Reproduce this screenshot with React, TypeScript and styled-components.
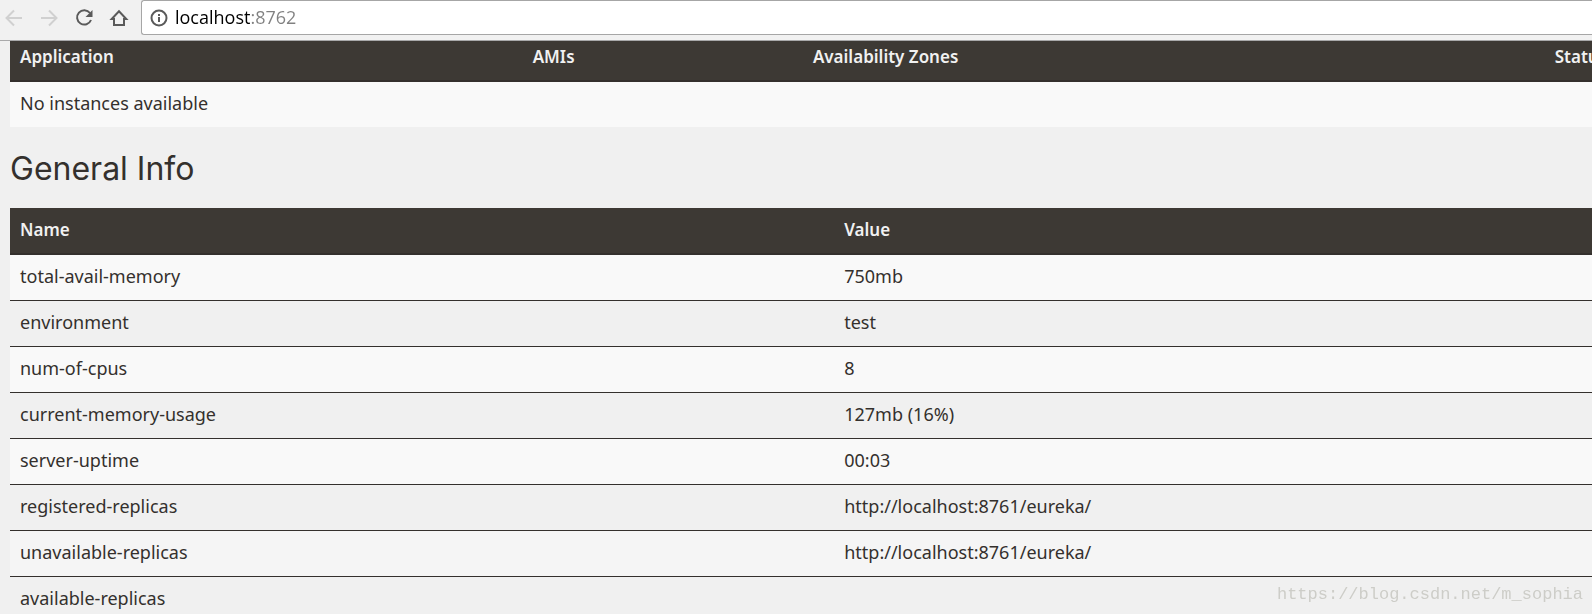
import React from "react";
import styled, { createGlobalStyle } from "styled-components";

const GlobalStyle = createGlobalStyle`
  * { box-sizing: border-box; }
  html, body, #root { height: 100%; }
  body {
    margin: 0;
    overflow: hidden;
    background: #f0f0f0;
    color: #34302d;
    font-family: "Noto Sans", sans-serif;
    font-size: 18px;
    line-height: 25px;
  }
`;

const Browser = styled.div`
  display: flex;
  flex-direction: column;
  height: 100%;
`;

const Toolbar = styled.header`
  flex: none;
  display: flex;
  align-items: flex-start;
  border-bottom: 1px solid #a9a9aa;
  background: #f1f1f1;
  height: 41px;
`;

const NavButtons = styled.nav`
  display: flex;
  gap: 11px;
  padding: 6px 10px 0 2px;
`;

const NavButton = styled.button`
  display: flex;
  width: 24px;
  height: 24px;
  padding: 0;
  border: 0;
  background: none;
  color: #5a5a5a;
  &:disabled { color: #d0d0d0; }
`;

const AddressBar = styled.label`
  flex: 1;
  display: flex;
  align-items: center;
  gap: 7px;
  height: 35px;
  padding-left: 8px;
  border: 1px solid #a6a6a6;
  border-right: 0;
  border-radius: 3px 0 0 3px;
  background: #fff;
  color: #5a5a5a;
`;

const AddressInput = styled.input`
  flex: 1;
  height: 32px;
  padding: 0 0 2px;
  border: 0;
  outline: 0;
  font-family: "Open Sans", sans-serif;
  font-size: 18px;
  color: transparent;
  background: linear-gradient(90deg, #000 76px, #808080 76px);
  background-clip: text;
  -webkit-background-clip: text;
`;

const Page = styled.main`
  flex: 1;
  min-height: 0;
  overflow: hidden;
  padding-left: 10px;
`;

const Title = styled.h1`
  margin: 24px 0 21px;
  font-family: Inter, sans-serif;
  font-size: 32px;
  font-weight: 400;
  line-height: 36px;
`;

const Table = styled.table`
  width: 104.2%;
  table-layout: fixed;
  border-collapse: separate;
  border-spacing: 0;
`;

const Col = styled.col<{ $share: number }>`
  width: ${(p) => p.$share}%;
`;

const HeadCell = styled.th<{ $tucked?: boolean }>`
  padding: ${(p) => (p.$tucked ? "3px 10px 11px" : "9px 10px 11px")};
  border-bottom: 2px solid #34302d;
  background: #3d3934;
  color: #f1f1f1;
  font-size: 17px;
  font-weight: 600;
  text-align: left;
  white-space: nowrap;
`;

const Row = styled.tr<{ $tone: string }>`
  background: ${(p) => p.$tone};
`;

const Cell = styled.td<{ $ruled?: boolean }>`
  padding: 9px 10px 11px;
  border-bottom: ${(p) => (p.$ruled ? "1px solid #34302d" : "0")};
`;

const Watermark = styled.div`
  position: fixed;
  right: 9px;
  bottom: 7px;
  color: #cdcdc8;
  font-family: "Liberation Mono", monospace;
  font-size: 17px;
`;

const info = [
  ["total-avail-memory", "750mb", "#f9f9f9"],
  ["environment", "test", "#f0f0f0"],
  ["num-of-cpus", "8", "#f9f9f9"],
  ["current-memory-usage", "127mb (16%)", "#f0f0f0"],
  ["server-uptime", "00:03", "#f9f9f9"],
  ["registered-replicas", "http://localhost:8761/eureka/", "#f0f0f0"],
  ["unavailable-replicas", "http://localhost:8761/eureka/", "#f5f5f5"],
  ["available-replicas", "", "#f0f0f0"],
];

const Glyph = ({ children }: { children: React.ReactNode }) => (
  <svg width="24" height="24" viewBox="0 0 24 24" fill="none" stroke="currentColor" strokeWidth="2">
    {children}
  </svg>
);

export default function App() {
  return (
    <Browser>
      <GlobalStyle />
      <Toolbar>
        <NavButtons>
          <NavButton aria-label="Back" disabled>
            <Glyph><path d="M20 12H5.500M12 4.500 4.500 12l7.500 7.500" /></Glyph>
          </NavButton>
          <NavButton aria-label="Forward" disabled>
            <Glyph><path d="M4 12h14.500M12 4.500l7.500 7.500-7.500 7.500" /></Glyph>
          </NavButton>
          <NavButton aria-label="Reload">
            <Glyph>
              <path d="M18 7A7.200 7.200 0 1 0 19 14" />
              <path d="M20.500 4v7h-7z" fill="currentColor" stroke="none" />
            </Glyph>
          </NavButton>
          <NavButton aria-label="Home">
            <Glyph><path d="M4.700 13 12 5.200l7.300 7.800H17v6H7v-6z" /></Glyph>
          </NavButton>
        </NavButtons>
        <AddressBar>
          <svg width="18" height="18" viewBox="0 0 18 18" fill="none" stroke="currentColor" strokeWidth="2">
            <circle cx="9" cy="9" r="7.500" />
            <path d="M9 8v5M9 5v2" />
          </svg>
          <AddressInput aria-label="Address" defaultValue="localhost:8762" spellCheck={false} />
        </AddressBar>
      </Toolbar>
      <Page>
        <Table>
          <colgroup>
            <Col $share={31.1} /><Col $share={17} /><Col $share={45} /><Col $share={6.9} />
          </colgroup>
          <thead>
            <tr>
              <HeadCell $tucked>Application</HeadCell>
              <HeadCell $tucked>AMIs</HeadCell>
              <HeadCell $tucked>Availability Zones</HeadCell>
              <HeadCell $tucked>Status</HeadCell>
            </tr>
          </thead>
          <tbody>
            <Row $tone="#f9f9f9"><Cell colSpan={4}>No instances available</Cell></Row>
          </tbody>
        </Table>
        <Title>General Info</Title>
        <Table>
          <colgroup><Col $share={50} /><Col $share={50} /></colgroup>
          <thead>
            <tr><HeadCell>Name</HeadCell><HeadCell>Value</HeadCell></tr>
          </thead>
          <tbody>
            {info.map(([name, value, tone]) => (
              <Row key={name} $tone={tone}>
                <Cell $ruled>{name}</Cell>
                <Cell $ruled>{value}</Cell>
              </Row>
            ))}
          </tbody>
        </Table>
      </Page>
      <Watermark>https://blog.csdn.net/m_sophia</Watermark>
    </Browser>
  );
}
